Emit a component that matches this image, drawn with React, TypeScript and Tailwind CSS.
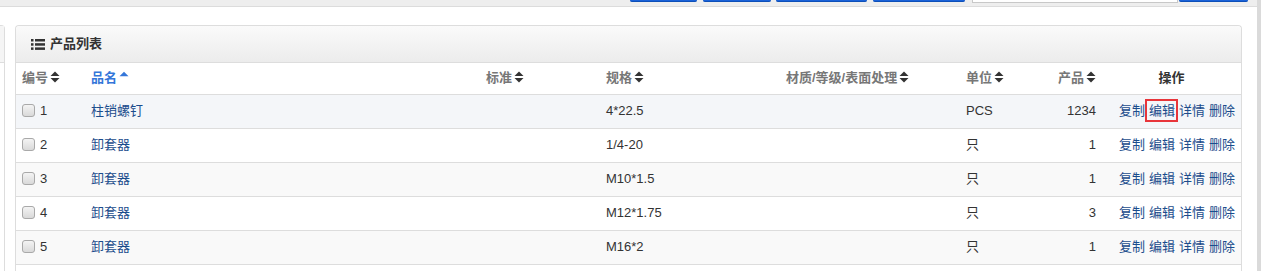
import React from "react";

type Row = {
  id: number;
  name: string;
  spec: string;
  unit: string;
  qty: number;
};

const rows: Row[] = [
  { id: 1, name: "柱销螺钉", spec: "4*22.5", unit: "PCS", qty: 1234 },
  { id: 2, name: "卸套器", spec: "1/4-20", unit: "只", qty: 1 },
  { id: 3, name: "卸套器", spec: "M10*1.5", unit: "只", qty: 1 },
  { id: 4, name: "卸套器", spec: "M12*1.75", unit: "只", qty: 3 },
  { id: 5, name: "卸套器", spec: "M16*2", unit: "只", qty: 1 },
];

// font-awesome style sort carets
function SortIcon({ asc = false }: { asc?: boolean }) {
  if (asc) {
    return (
      <svg width="10" height="12" viewBox="0 0 10 12" className="ml-[2px] inline-block align-[-1px]">
        <path d="M0.5 5.2 L5 0.8 L9.5 5.2 Z" fill="#3476d9" />
      </svg>
    );
  }
  return (
    <svg width="10" height="12" viewBox="0 0 10 12" className="ml-[2px] inline-block align-[-1px]">
      <path d="M0.5 5 L5 0.6 L9.5 5 Z" fill="#333" />
      <path d="M0.5 7 L9.5 7 L5 11.4 Z" fill="#333" />
    </svg>
  );
}

function ListIcon() {
  return (
    <svg width="14" height="11" viewBox="0 0 14 11" className="mr-[5px]">
      <rect x="0" y="0" width="2.5" height="2.5" fill="#333" />
      <rect x="0" y="4.2" width="2.5" height="2.5" fill="#333" />
      <rect x="0" y="8.4" width="2.5" height="2.5" fill="#333" />
      <rect x="4" y="0" width="10" height="2.5" fill="#333" />
      <rect x="4" y="4.2" width="10" height="2.5" fill="#333" />
      <rect x="4" y="8.4" width="10" height="2.5" fill="#333" />
    </svg>
  );
}

function Checkbox() {
  return (
    <span className="inline-block w-[13px] h-[13px] rounded-[3px] border border-[#a9a9a9] bg-linear-to-b from-[#f4f4f4] to-[#d9d9d9] align-[-2px]" />
  );
}

const linkCls = "text-[#1b4c8c]";

export default function App() {
  return (
    <div
      className="w-[1261px] h-[271px] overflow-hidden bg-white flex items-start text-[13px] text-[#333]"
      style={{ fontFamily: '"Liberation Sans", "Noto Sans CJK SC", sans-serif' }}
    >
      <div className="w-[1257px] flex flex-col">
        {/* top toolbar, mostly scrolled off */}
        <div className="h-[7px] shrink-0 bg-[#eeeeee] border-b border-[#dcdcdc] flex items-start pl-[630px]">
          <div className="w-[67px] h-[2px] bg-[#1a62d8] border-b border-[#0d4fb8] rounded-b-[3px]" />
          <div className="ml-[6px] w-[68px] h-[2px] bg-[#1a62d8] border-b border-[#0d4fb8] rounded-b-[3px]" />
          <div className="ml-[5px] w-[91px] h-[2px] bg-[#1a62d8] border-b border-[#0d4fb8] rounded-b-[3px]" />
          <div className="ml-[6px] w-[92px] h-[2px] bg-[#1a62d8] border-b border-[#0d4fb8] rounded-b-[3px]" />
          <div className="ml-[7px] w-[206px] h-[3px] bg-white border border-t-0 border-[#c8c8c8]" />
          <div className="ml-[1px] w-[69px] h-[2px] bg-[#1a62d8] border-b border-[#0d4fb8] rounded-b-[3px]" />
        </div>

        <div className="mt-[18px] flex shrink-0">
          {/* neighbouring panel edge */}
          <div className="w-[5px] border-t border-r border-[#dddddd] rounded-tr-[4px]">
            <div className="h-[37px] bg-[#f5f5f5] border-b border-[#dddddd]" />
          </div>

          {/* product list panel */}
          <div className="ml-[10px] w-[1227px] border border-b-0 border-[#dddddd] rounded-t-[4px]">
            <div className="h-[37px] bg-linear-to-b from-[#fafafa] to-[#ececec] border-b border-[#dddddd] flex items-center pl-[15px] font-bold text-[#333] rounded-t-[4px]">
              <ListIcon />
              <span className="text-[13px]">产品列表</span>
            </div>

            <table className="w-[1225px] table-fixed border-collapse">
              <colgroup>
                <col className="w-[69px]" />
                <col className="w-[395px]" />
                <col className="w-[120px]" />
                <col className="w-[180px]" />
                <col className="w-[180px]" />
                <col className="w-[60px]" />
                <col className="w-[82px]" />
                <col className="w-[139px]" />
              </colgroup>
              <thead>
                <tr className="h-[31px] border-b border-[#dddddd] font-bold text-[#777] leading-[18px]">
                  <th className="px-[6px] py-0 text-left whitespace-nowrap">
                    编号
                    <SortIcon />
                  </th>
                  <th className="px-[6px] py-0 text-left text-[#3476d9]">
                    品名
                    <SortIcon asc />
                  </th>
                  <th className="px-[6px] py-0 text-left">
                    标准
                    <SortIcon />
                  </th>
                  <th className="px-[6px] py-0 text-left">
                    规格
                    <SortIcon />
                  </th>
                  <th className="px-[6px] py-0 text-left whitespace-nowrap">
                    材质/等级/表面处理
                    <SortIcon />
                  </th>
                  <th className="px-[6px] py-0 text-left whitespace-nowrap">
                    单位
                    <SortIcon />
                  </th>
                  <th className="px-[6px] py-0 text-right whitespace-nowrap">
                    产品
                    <SortIcon />
                  </th>
                  <th className="px-[6px] py-0 text-center text-[#333]">操作</th>
                </tr>
              </thead>
              <tbody>
                {rows.map((r, i) => (
                  <tr
                    key={r.id}
                    className={`h-[34px] border-b border-[#dddddd] ${
                      i === 0 ? "bg-[#f4f6f9]" : i % 2 === 0 ? "bg-[#f9f9f9]" : "bg-white"
                    }`}
                  >
                    <td className="px-[6px] whitespace-nowrap">
                      <Checkbox />
                      <span className="ml-[5px]">{r.id}</span>
                    </td>
                    <td className={`px-[6px] ${linkCls}`}>{r.name}</td>
                    <td className="px-[6px]"></td>
                    <td className="px-[6px]">{r.spec}</td>
                    <td className="px-[6px]"></td>
                    <td className="px-[6px]">{r.unit}</td>
                    <td className="px-[6px] text-right">{r.qty}</td>
                    <td className="pr-[6px]">
                      <div className={`flex justify-end gap-[4px] ${linkCls}`}>
                        <span>复制</span>
                        <span className="relative">
                          编辑
                          {i === 0 && (
                            <span className="absolute -left-[4px] -right-[3px] -top-[2px] -bottom-[1px] border-2 border-[#e8353a]" />
                          )}
                        </span>
                        <span>详情</span>
                        <span>删除</span>
                      </div>
                    </td>
                  </tr>
                ))}
                <tr className="h-[34px] bg-white">
                  <td colSpan={8}></td>
                </tr>
              </tbody>
            </table>
          </div>
        </div>
      </div>
      <div className="w-[4px] h-[271px] bg-[#dadada]" />
    </div>
  );
}
